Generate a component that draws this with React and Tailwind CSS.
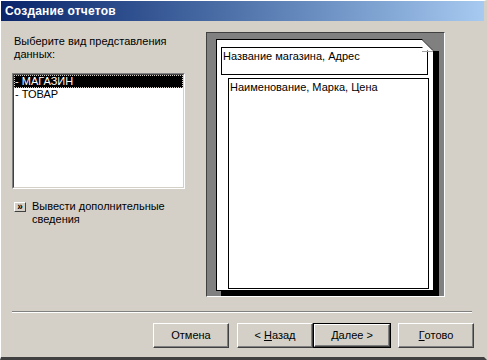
import React from "react"

const Btn = ({ children, isDefault }) => {
  return (
    <div className={isDefault ? "border border-black" : ""}>
      <div
        className={
          "flex items-center justify-center border border-t-white border-l-white border-r-[#404040] border-b-[#404040] shadow-[inset_-1px_-1px_0_#808080] text-[11px] text-black " +
          (isDefault ? "w-[76px] h-[23px]" : "w-[76px] h-[25px]")
        }
      >
        {children}
      </div>
    </div>
  )
}

const App = () => {
  return (
    <div className="w-[487px] h-[360px] bg-[#d4d0c8] flex flex-col border-l border-t border-white border-r-[3px] border-r-[#d4d0c8] border-b-[3px] border-b-[#404040] font-['Liberation_Sans',Arial,sans-serif] text-[11px] leading-[13px] text-black overflow-hidden">
      {/* title bar */}
      <div className="h-[20px] shrink-0 bg-gradient-to-r from-[#0a246a] to-[#a6caf0] pl-[4px] flex items-center">
        <span className="text-white font-bold text-[12px] tracking-[0.2px]">Создание отчетов</span>
      </div>

      <div className="flex pl-[11px]">
        {/* left column */}
        <div className="w-[173px] flex flex-col">
          <p className="pt-[14px] pl-[2px]">
            Выберите вид представления
            <br />
            данных:
          </p>
          <div className="mt-[12px] h-[116px] border border-t-[#808080] border-l-[#808080] border-r-white border-b-white">
            <div className="h-full border border-t-[#404040] border-l-[#404040] border-r-[#d4d0c8] border-b-[#d4d0c8] bg-white">
              <div className="h-[13px] bg-black text-white pl-[1px] outline-1 outline-dotted outline-[#d4d0c8] -outline-offset-1">
                - МАГАЗИН
              </div>
              <div className="h-[13px] pl-[1px]">- ТОВАР</div>
            </div>
          </div>
          <div className="mt-[11px] flex items-start pl-[2px]">
            <div className="mt-[2px] w-[12px] h-[10px] border border-t-white border-l-white border-r-[#404040] border-b-[#404040] flex items-center justify-center text-[10px] leading-[8px] font-bold">
              »
            </div>
            <p className="ml-[6px]">
              Вывести дополнительные
              <br />
              сведения
            </p>
          </div>
        </div>

        {/* preview */}
        <div className="ml-[21px] mt-[11px] w-[239px] h-[265px] border border-t-[#404040] border-l-[#404040] border-r-white border-b-white bg-[#808080] pl-[9px] pt-[6px]">
          <div className="relative w-[218px] h-[252px] bg-white border border-black shadow-[5px_5px_0_0_#000]">
            <div className="ml-[4px] mt-[7px] w-[207px] h-[28px] border border-black pl-[1px] pt-[2px]">
              Название магазина, Адрес
            </div>
            <div className="ml-[11px] mt-[3px] w-[201px] h-[211px] border border-black pl-[1px] pt-[2px]">
              Наименование, Марка, Цена
            </div>
            <svg className="absolute -top-[1px] -right-[6px]" width="17" height="17" viewBox="0 0 17 17">
              <polygon points="0,0 17,0 17,17 11,17 11,12" fill="#808080" />
              <polygon points="0.5,0.5 0.5,11.5 11.5,11.5" fill="white" />
              <line x1="0" y1="0.5" x2="11" y2="11.5" stroke="black" strokeWidth="1" />
              <line x1="0" y1="12.5" x2="12" y2="12.5" stroke="#a0a0a0" strokeWidth="1" />
              <rect x="11" y="12" width="6" height="5" fill="#000" />
            </svg>
          </div>
        </div>
      </div>

      {/* separator */}
      <div className="ml-[11px] mt-[14px] w-[460px] h-[2px] border-t border-t-[#808080] border-b border-b-white" />

      {/* buttons */}
      <div className="mt-[10px] ml-[152px] flex items-start">
        <Btn>Отмена</Btn>
        <div className="ml-[8px]">
          <Btn>
            &lt; <span className="underline ml-[3px]">Н</span>азад
          </Btn>
        </div>
        <Btn isDefault>
          <span className="underline">Д</span>алее &gt;
        </Btn>
        <div className="ml-[7px]">
          <Btn>
            <span className="underline">Г</span>отово
          </Btn>
        </div>
      </div>
    </div>
  )
}

export default App
